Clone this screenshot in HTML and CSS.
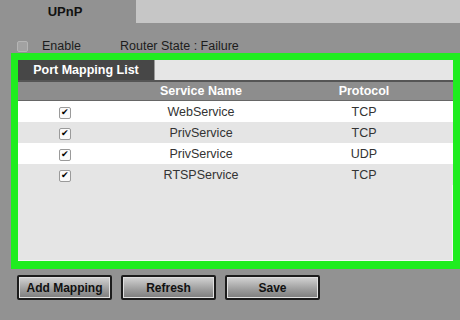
FILE: index.html
```html
<!DOCTYPE html>
<html lang="en">
<head>
  <meta charset="UTF-8" />
  <title>UPnP</title>
  <link rel="stylesheet" href="styles.css">
</head>
<body>
  <div class="tabs">
    <div class="tab active">UPnP</div>
    <div class="tab-rest"></div>
  </div>

  <div class="state">
    <label class="enable"><span class="box"></span>Enable</label>
    <span class="router">Router State : Failure</span>
  </div>

  <div class="frame">
    <div class="list-tabs">
      <div class="list-tab">Port Mapping List</div>
      <div class="list-rest"></div>
    </div>

    <div class="grid head">
      <div></div>
      <div>Service Name</div>
      <div>Protocol</div>
    </div>
    <div class="grid row">
      <div><span class="check">&#10004;</span></div>
      <div>WebService</div>
      <div>TCP</div>
    </div>
    <div class="grid row alt">
      <div><span class="check">&#10004;</span></div>
      <div>PrivService</div>
      <div>TCP</div>
    </div>
    <div class="grid row">
      <div><span class="check">&#10004;</span></div>
      <div>PrivService</div>
      <div>UDP</div>
    </div>
    <div class="grid row alt">
      <div><span class="check">&#10004;</span></div>
      <div>RTSPService</div>
      <div>TCP</div>
    </div>
  </div>

  <div class="buttons">
    <button>Add Mapping</button>
    <button>Refresh</button>
    <button>Save</button>
  </div>
</body>
</html>
```

FILE: styles.css
```css
body {
  margin: 0;
  width: 460px;
  height: 320px;
  background: #929292;
  font-family: "Liberation Sans", Arial, sans-serif;
  font-size: 12.5px;
  color: #1c1c1c;
  overflow: hidden;
}

.tabs {
  display: flex;
  height: 23px;
}

.tab {
  width: 136px;
  display: flex;
  align-items: center;
  justify-content: center;
  font-weight: bold;
  font-size: 13px;
  color: #111;
  padding-right: 6px;
  box-sizing: border-box;
}

.tab-rest {
  flex: 1;
  background: #c6c6c6;
}

.state {
  display: flex;
  align-items: center;
  height: 14px;
  margin-top: 16px;
  padding-left: 17px;
}

.enable {
  display: flex;
  align-items: center;
  width: 103px;
}

.box {
  width: 9px;
  height: 9px;
  border: 1px solid #b5b5b5;
  background: #a2a2a2;
  border-radius: 2px;
  margin-right: 14px;
}

.frame {
  margin-left: 11px;
  height: 201px;
  border: 7px solid #1fed1f;
  border-bottom-width: 8px;
  background: #e5e5e5;
  box-shadow: inset -1px -1px 0 #f6f6f6;
}

.list-tabs {
  display: flex;
  height: 20px;
  border-bottom: 2px solid #555;
}

.list-tab {
  width: 136px;
  background: #474747;
  color: #fff;
  font-weight: bold;
  display: flex;
  align-items: center;
  justify-content: center;
}

.list-rest {
  flex: 1;
  background: #e6e6e6;
  border-left: 1px solid #9a9a9a;
}

.grid {
  display: grid;
  grid-template-columns: 92px 182px 144px;
  align-items: center;
  text-align: center;
}

.head {
  height: 18px;
  background: #8d8d8d;
  color: #fff;
  font-weight: bold;
  border-bottom: 1px solid #666;
}

.row {
  height: 21px;
  background: #fff;
  color: #333;
}

.row.alt {
  background: #e5e5e5;
}

.check {
  display: inline-flex;
  align-items: center;
  justify-content: center;
  width: 10px;
  height: 10px;
  border: 1px solid #9a9a9a;
  border-radius: 2px;
  background: #fafafa;
  color: #000;
  font-size: 9px;
  line-height: 1;
  margin-left: 2px;
}

.buttons {
  display: flex;
  gap: 9px;
  margin: 6px 0 0 17px;
}

button {
  width: 95px;
  height: 25px;
  border: 2px solid #1c1c1c;
  border-radius: 2px;
  background: linear-gradient(#d4d4d4, #9c9c9c 60%, #7d7d7d);
  box-shadow: inset 0 0 0 1px #e0e0e0;
  font-family: "Liberation Sans", Arial, sans-serif;
  font-weight: bold;
  font-size: 12px;
  color: #111;
  padding: 0;
}
```
